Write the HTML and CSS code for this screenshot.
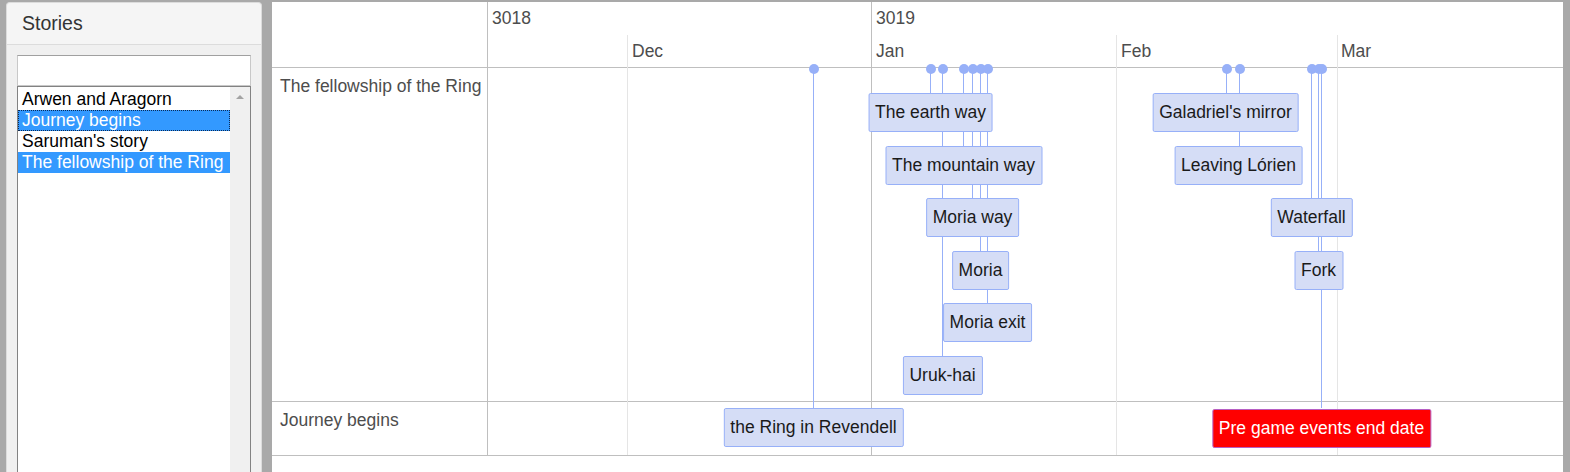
FILE: index.html
```html
<!DOCTYPE html>
<html>
<head>
<meta charset="utf-8">
<title>Stories timeline</title>
<link rel="stylesheet" href="styles.css">
</head>
<body>
<div class="app">
  <aside class="panel">
    <div class="panel-heading">Stories</div>
    <div class="panel-body">
      <div class="search"></div>
      <div class="listbox">
        <div class="options">
          <div class="opt">Arwen and Aragorn</div>
          <div class="opt selected focused">Journey begins</div>
          <div class="opt">Saruman's story</div>
          <div class="opt selected">The fellowship of the Ring</div>
        </div>
        <div class="scrollbar"><span class="arrow-up"></span></div>
      </div>
    </div>
  </aside>

  <main class="timeline">
    <div class="tl-grid">
      <div class="label-cell head-cell"></div>
      <div class="axis-cell head-cell"></div>
      <div class="label-cell group1">The fellowship of the Ring</div>
      <div class="row-cell group1"></div>
      <div class="label-cell group2">Journey begins</div>
      <div class="row-cell group2"></div>
    </div>

    <div class="canvas">
      <div class="grid major" style="left:383px"></div>
      <div class="grid minor" style="left:139px"></div>
      <div class="grid minor" style="left:628px"></div>
      <div class="grid minor" style="left:849px"></div>

      <div class="axis-text year" style="left:4px">3018</div>
      <div class="axis-text year" style="left:388px">3019</div>
      <div class="axis-text month" style="left:144px">Dec</div>
      <div class="axis-text month" style="left:388px">Jan</div>
      <div class="axis-text month" style="left:633px">Feb</div>
      <div class="axis-text month" style="left:853px">Mar</div>

      <div class="vline" style="left:325px;height:339px"></div>
      <div class="vline" style="left:442px;height:24px"></div>
      <div class="vline" style="left:454px;height:287px"></div>
      <div class="vline" style="left:475px;height:77px"></div>
      <div class="vline" style="left:484px;height:129px"></div>
      <div class="vline" style="left:492px;height:182px"></div>
      <div class="vline" style="left:499px;height:234px"></div>
      <div class="vline" style="left:738px;height:24px"></div>
      <div class="vline" style="left:751px;height:77px"></div>
      <div class="vline" style="left:823px;height:129px"></div>
      <div class="vline" style="left:830px;height:182px"></div>
      <div class="vline" style="left:833px;height:339px"></div>

      <div class="box" style="left:325.5px;top:406px">the Ring in Revendell</div>
      <div class="box" style="left:442.5px;top:91px">The earth way</div>
      <div class="box" style="left:475.5px;top:144px">The mountain way</div>
      <div class="box" style="left:484.5px;top:196px">Moria way</div>
      <div class="box" style="left:492.5px;top:249px">Moria</div>
      <div class="box" style="left:499.5px;top:301px">Moria exit</div>
      <div class="box" style="left:454.5px;top:354px">Uruk-hai</div>
      <div class="box" style="left:737.5px;top:91px">Galadriel's mirror</div>
      <div class="box" style="left:750.5px;top:144px">Leaving Lórien</div>
      <div class="box" style="left:823.5px;top:196px">Waterfall</div>
      <div class="box" style="left:830.5px;top:249px">Fork</div>
      <div class="box red" style="left:833.5px;top:407px">Pre game events end date</div>

      <div class="dot" style="left:325px"></div>
      <div class="dot" style="left:442px"></div>
      <div class="dot" style="left:454px"></div>
      <div class="dot" style="left:475px"></div>
      <div class="dot" style="left:484px"></div>
      <div class="dot" style="left:492px"></div>
      <div class="dot" style="left:499px"></div>
      <div class="dot" style="left:738px"></div>
      <div class="dot" style="left:751px"></div>
      <div class="dot" style="left:823px"></div>
      <div class="dot" style="left:830px"></div>
      <div class="dot" style="left:833px"></div>
    </div>
  </main>
</div>
</body>
</html>
```

FILE: styles.css
```css
* { box-sizing: border-box; }

html, body {
  margin: 0;
  height: 472px;
  overflow: hidden;
}

body {
  background: #a9a9a9;
  font-family: "Liberation Sans", Arial, sans-serif;
  font-size: 17.5px;
}

.app {
  display: flex;
  gap: 10px;
  padding: 2px 7px 0 6px;
  height: 472px;
}

/* ---------- left panel ---------- */
.panel {
  width: 256px;
  flex: none;
  border: 1px solid #dcdcdc;
  border-bottom: none;
  border-radius: 4px 4px 0 0;
  background: #f0f0f0;
  display: flex;
  flex-direction: column;
}

.panel-heading {
  height: 42px;
  padding-left: 15px;
  display: flex;
  align-items: center;
  font-size: 19.5px;
  color: #333;
  background: #f5f5f5;
  border-bottom: 1px solid #dcdcdc;
  border-radius: 4px 4px 0 0;
}

.panel-body {
  padding: 10px 10px 0 10px;
  flex: 1;
  display: flex;
  flex-direction: column;
}

.search {
  height: 31px;
  background: #fff;
  border: 1px solid #c8c8c8;
  border-top-color: #a0a0a0;
}

.listbox {
  flex: 1;
  display: flex;
  background: #fff;
  border: 1px solid #828282;
  border-bottom: none;
}

.options {
  flex: 1;
  padding-top: 2px;
}

.opt {
  height: 21px;
  line-height: 21px;
  padding-left: 4px;
  color: #000;
  white-space: nowrap;
}

.opt.selected {
  background: #3399ff;
  color: #fff;
}

.opt.focused {
  outline: 1px dotted #0b2a55;
  outline-offset: -1px;
}

.scrollbar {
  width: 20px;
  flex: none;
  background: #f0f0f0;
  display: flex;
  justify-content: center;
  padding-top: 8px;
}

.arrow-up {
  width: 0;
  height: 0;
  border-left: 4px solid transparent;
  border-right: 4px solid transparent;
  border-bottom: 4px solid #a3a3a3;
}

/* ---------- timeline ---------- */
.timeline {
  flex: 1;
  background: #fff;
  position: relative;
  color: #4d4d4d;
}

.tl-grid {
  display: grid;
  grid-template-columns: 216px 1fr;
  grid-template-rows: 66px 334px 54px;
}

.tl-grid > div {
  border-bottom: 1px solid #bfbfbf;
}

.label-cell {
  border-right: 1px solid #bfbfbf;
  padding: 8px 0 0 8px;
  line-height: 20px;
  white-space: nowrap;
}

.canvas {
  position: absolute;
  left: 216px;
  top: 0;
  right: 0;
  height: 453px;
  overflow: hidden;
}

.grid {
  position: absolute;
  width: 1px;
  bottom: 0;
}

.grid.major {
  top: 0;
  background: #bfbfbf;
}

.grid.minor {
  top: 33px;
  background: #e5e5e5;
}

.axis-text {
  position: absolute;
  line-height: 20px;
  color: #4d4d4d;
  white-space: nowrap;
}

.axis-text.year { top: 6px; }
.axis-text.month { top: 39px; }

.vline {
  position: absolute;
  top: 67px;
  width: 1px;
  background: #97b0f8;
}

.dot {
  position: absolute;
  top: 62px;
  width: 10px;
  height: 10px;
  margin-left: -4.5px;
  border-radius: 50%;
  background: #97b0f8;
}

.box {
  position: absolute;
  transform: translateX(-50%);
  white-space: nowrap;
  padding: 6px 6px;
  line-height: 25px;
  color: #1a1a1a;
  background: #d5ddf6;
  border: 1px solid #97b0f8;
  border-radius: 2px;
}

.box.red {
  background: #ff0000;
  color: #fff;
  border-color: #b75fc4;
}
```
